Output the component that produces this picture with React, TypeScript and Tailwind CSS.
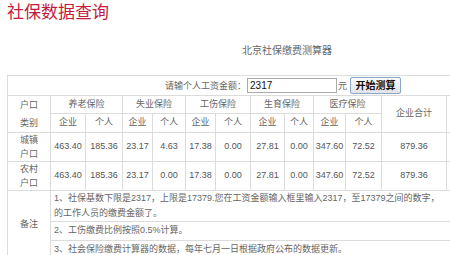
import React from 'react'

const cols = [43, 35, 37, 30, 33, 30, 35, 34, 29, 32, 36, 65, 121]

const rows = [
  { name: ['城镇', '户口'], vals: ['463.40', '185.36', '23.17', '4.63', '17.38', '0.00', '27.81', '0.00', '347.60', '72.52', '879.36'], h: 'h-[26px]' },
  { name: ['农村', '户口'], vals: ['463.40', '185.36', '23.17', '0.00', '17.38', '0.00', '27.81', '0.00', '347.60', '72.52', '879.36'], h: 'h-[27px]' },
]

const td = 'border border-[#dcdcdc] p-0 text-center align-middle'

const App: React.FC = () => {
  return (
    <div className="w-[450px] h-[255px] overflow-hidden bg-white font-['Liberation_Sans','Noto_Sans_CJK_SC',sans-serif]">
      <h1 className="pl-[7px] pt-[3px] text-[17px] leading-[20px] text-[#c41a3b] font-normal">社保数据查询</h1>
      <div className="w-[560px] ml-[7px]">
        <p className="mt-[21px] text-center text-[10px] leading-[14px] text-[#666]">北京社保缴费测算器</p>
        <table className="mt-[17px] table-fixed border-collapse w-[560px] text-[9px] text-[#666]">
          <colgroup>
            {cols.map((w, i) => (
              <col key={i} style={{ width: w }} />
            ))}
          </colgroup>
          <tbody>
            <tr className="h-[20px]">
              <td colSpan={13} className={td}>
                <div className="flex items-center justify-center pr-[9px]">
                  <span className="leading-[14px]">请输个人工资金额：</span>
                  <input
                    defaultValue="2317"
                    className="ml-[1px] w-[90px] h-[15px] border border-[#a9a9a9] bg-white px-[2px] text-[10px] text-[#111] outline-none"
                  />
                  <span className="ml-[1px] leading-[14px]">元</span>
                  <button className="ml-[3px] h-[17px] w-[51px] rounded-[2px] border border-[#8aa6c8] bg-gradient-to-b from-[#fafafa] to-[#e2e4e8] text-[10px] font-bold text-[#111] leading-[15px]">
                    开始测算
                  </button>
                </div>
              </td>
            </tr>
            <tr className="h-[18px]">
              <td rowSpan={2} className={`${td} leading-[18px]`}>
                户口<br />类别
              </td>
              <td colSpan={2} className={td}>养老保险</td>
              <td colSpan={2} className={td}>失业保险</td>
              <td colSpan={2} className={td}>工伤保险</td>
              <td colSpan={2} className={td}>生育保险</td>
              <td colSpan={2} className={td}>医疗保险</td>
              <td rowSpan={2} className={td}>企业合计</td>
              <td rowSpan={2} className={td}></td>
            </tr>
            <tr className="h-[19px]">
              {Array.from({ length: 5 }).map((_, i) => (
                <React.Fragment key={i}>
                  <td className={td}>企业</td>
                  <td className={td}>个人</td>
                </React.Fragment>
              ))}
            </tr>
            {rows.map((r) => (
              <tr key={r.name[0]} className={r.h}>
                <td className={`${td} leading-[14px]`}>
                  {r.name[0]}<br />{r.name[1]}
                </td>
                {r.vals.map((v, i) => (
                  <td key={i} className={`${td} text-[#555]`}>{v}</td>
                ))}
                <td className={td}></td>
              </tr>
            ))}
            <tr className="h-[31px]">
              <td rowSpan={3} className={td}>备注</td>
              <td colSpan={12} className={`${td} text-left pl-[3px] leading-[15px] whitespace-nowrap`}>
                1、社保基数下限是2317，上限是17379.您在工资金额输入框里输入2317，至17379之间的数字，
                <br />
                的工作人员的缴费金额了。
              </td>
            </tr>
            <tr className="h-[19px]">
              <td colSpan={12} className={`${td} text-left pl-[3px]`}>2、工伤缴费比例按照0.5%计算。</td>
            </tr>
            <tr className="h-[19px]">
              <td colSpan={12} className={`${td} text-left pl-[3px]`}>3、社会保险缴费计算器的数据，每年七月一日根据政府公布的数据更新。</td>
            </tr>
          </tbody>
        </table>
      </div>
    </div>
  )
}

export default App
